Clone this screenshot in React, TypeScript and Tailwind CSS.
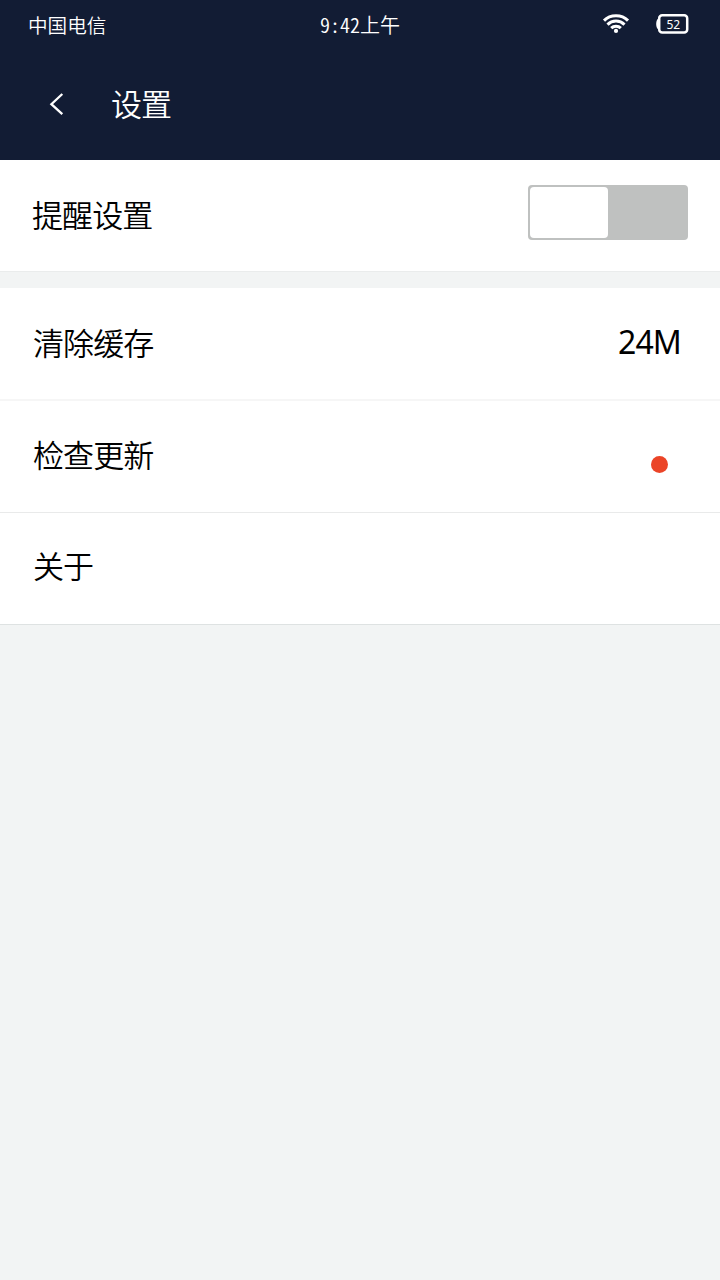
import React from "react";

function WifiIcon() {
  return (
    <svg width="28" height="22" viewBox="0 0 28 22" fill="none" stroke="#fff" strokeWidth="3">
      <path d="M2 8.6C8.4 2.1 19.6 2.1 26 8.6" />
      <path d="M5.5 12.6C10.2 7.9 17.8 7.9 22.5 12.6" />
      <path d="M9.2 16.1C11.8 13.5 16.2 13.5 18.8 16.1" />
      <circle cx="14" cy="18.9" r="2.1" fill="#fff" stroke="none" />
    </svg>
  );
}

function BatteryIcon() {
  return (
    <div className="relative h-5 w-8">
      <svg width="33" height="20" viewBox="0 0 33 20" fill="none">
        <path d="M4 4C1 4.6 .2 7 .2 10s.8 5.4 3.8 6z" fill="#fff" />
        <rect x="3.2" y="1.3" width="28" height="17.3" rx="3" stroke="#fff" strokeWidth="2.5" />
      </svg>
      <span className="absolute left-[10.5px] top-[4px] text-[12px] leading-[14px]">52</span>
    </div>
  );
}

function Row({ label, className, children }: { label: string; className: string; children?: React.ReactNode }) {
  return (
    <div className={`flex justify-between bg-white ${className}`}>
      <span className="text-[31px] font-[350] leading-[44px] tracking-[-0.9px]">{label}</span>
      {children}
    </div>
  );
}

export default function App() {
  return (
    <div className="flex h-[1280px] w-[720px] flex-col bg-[#f2f4f4] font-['Noto_Sans','Noto_Sans_CJK_SC',sans-serif] text-black">
      <header className="h-40 bg-[#121c34] text-white">
        <div className="grid h-12 grid-cols-3 font-['Noto_Sans_CJK_SC',sans-serif] text-[19.6px] leading-[28px]">
          <span className="pl-7 pt-[11px] font-[350]">中国电信</span>
          <span className="pt-[11px] text-center text-[20px] font-[350] [font-feature-settings:'hwid']">9:42上午</span>
          <div className="flex justify-end gap-[26px] pr-8 pt-[14px] font-['Noto_Sans',sans-serif]">
            <div className="-mt-0.5"><WifiIcon /></div>
            <BatteryIcon />
          </div>
        </div>
        <div className="flex h-28 items-center pl-[49px]">
          <svg width="16" height="24" viewBox="0 0 16 24" fill="none" stroke="#fff" strokeWidth="2.3">
            <path d="M13.3 2L2.4 12.2L13.3 22.2" />
          </svg>
          <h1 className="ml-[46px] text-[31px] font-[350] leading-[44px] tracking-[-0.9px]">设置</h1>
        </div>
      </header>
      <main>
        <Row label="提醒设置" className="h-28 border-b border-[#eaecec] pl-8 pr-8 pt-[33px]">
          <div className="-mt-2 flex h-[55px] w-40 rounded-[4px] bg-[#bfc1c0] p-0.5">
            <div className="w-[78.4px] rounded-[4px] bg-white" />
          </div>
        </Row>
        <div className="h-4" />
        <Row label="清除缓存" className="h-[113px] border-b-2 border-[#f6f6f6] pl-[33px] pr-[39px] pt-[33px]">
          <span className="text-[32px] font-normal leading-[42px] tracking-[-0.9px]">24M</span>
        </Row>
        <Row label="检查更新" className="h-28 border-b border-[#e9eaea] pl-[33px] pr-[52.5px] pt-[32px]">
          <span className="mt-[23px] size-[17px] rounded-full bg-[#eb4427]" />
        </Row>
        <Row label="关于" className="h-28 border-b border-[#dee2e2] pl-[33px] pt-[31px]" />
      </main>
    </div>
  );
}
